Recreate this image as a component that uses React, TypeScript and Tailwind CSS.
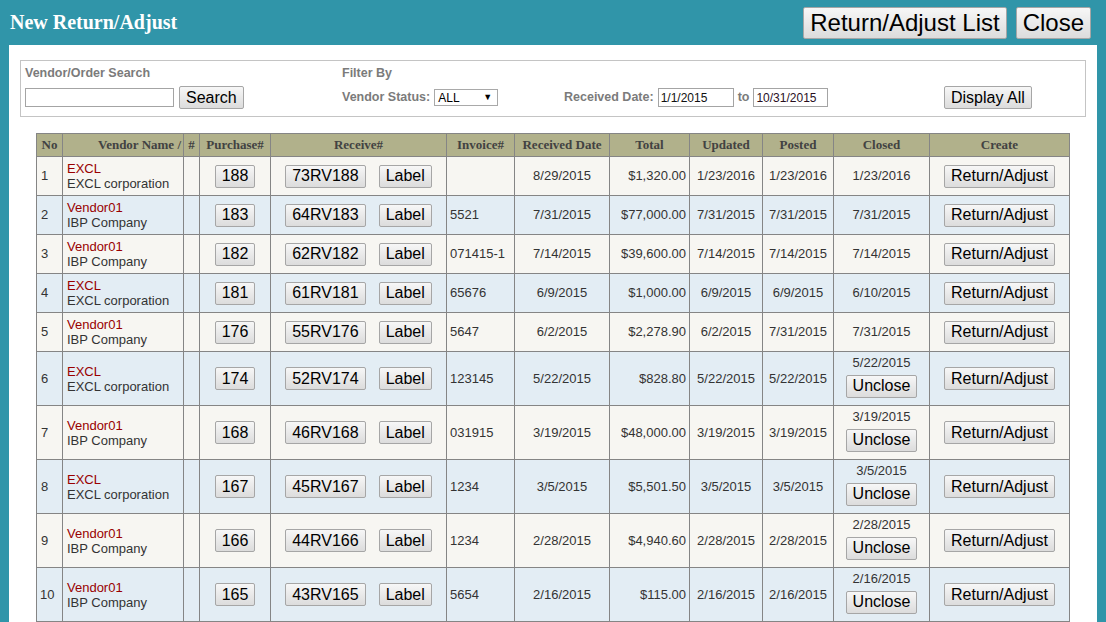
import React from "react";

const SANS = "font-['Liberation_Sans',Arial,sans-serif]";
const SERIF = "font-['Liberation_Serif','Times_New_Roman',serif]";

function Btn({ children, big = false }: { children: React.ReactNode; big?: boolean }) {
  return (
    <button
      type="button"
      className={`${SANS} font-normal inline-flex items-center justify-center whitespace-nowrap border border-[#a6a6a6] rounded-[2px] bg-linear-to-b from-[#f7f7f7] to-[#dcdcdc] text-black leading-none ${
        big ? "h-[32px] px-[6px] text-[24px]" : "h-[23px] px-[6px] text-[16px]"
      }`}
    >
      {children}
    </button>
  );
}

type Row = {
  vendor: string;
  company: string;
  po: string;
  rv: string;
  inv: string;
  rdate: string;
  total: string;
  updated: string;
  posted: string;
  closed: string;
  unclose: boolean;
};

const rows: Row[] = [
  { vendor: "EXCL", company: "EXCL corporation", po: "188", rv: "73RV188", inv: "", rdate: "8/29/2015", total: "$1,320.00", updated: "1/23/2016", posted: "1/23/2016", closed: "1/23/2016", unclose: false },
  { vendor: "Vendor01", company: "IBP Company", po: "183", rv: "64RV183", inv: "5521", rdate: "7/31/2015", total: "$77,000.00", updated: "7/31/2015", posted: "7/31/2015", closed: "7/31/2015", unclose: false },
  { vendor: "Vendor01", company: "IBP Company", po: "182", rv: "62RV182", inv: "071415-1", rdate: "7/14/2015", total: "$39,600.00", updated: "7/14/2015", posted: "7/14/2015", closed: "7/14/2015", unclose: false },
  { vendor: "EXCL", company: "EXCL corporation", po: "181", rv: "61RV181", inv: "65676", rdate: "6/9/2015", total: "$1,000.00", updated: "6/9/2015", posted: "6/9/2015", closed: "6/10/2015", unclose: false },
  { vendor: "Vendor01", company: "IBP Company", po: "176", rv: "55RV176", inv: "5647", rdate: "6/2/2015", total: "$2,278.90", updated: "6/2/2015", posted: "7/31/2015", closed: "7/31/2015", unclose: false },
  { vendor: "EXCL", company: "EXCL corporation", po: "174", rv: "52RV174", inv: "123145", rdate: "5/22/2015", total: "$828.80", updated: "5/22/2015", posted: "5/22/2015", closed: "5/22/2015", unclose: true },
  { vendor: "Vendor01", company: "IBP Company", po: "168", rv: "46RV168", inv: "031915", rdate: "3/19/2015", total: "$48,000.00", updated: "3/19/2015", posted: "3/19/2015", closed: "3/19/2015", unclose: true },
  { vendor: "EXCL", company: "EXCL corporation", po: "167", rv: "45RV167", inv: "1234", rdate: "3/5/2015", total: "$5,501.50", updated: "3/5/2015", posted: "3/5/2015", closed: "3/5/2015", unclose: true },
  { vendor: "Vendor01", company: "IBP Company", po: "166", rv: "44RV166", inv: "1234", rdate: "2/28/2015", total: "$4,940.60", updated: "2/28/2015", posted: "2/28/2015", closed: "2/28/2015", unclose: true },
  { vendor: "Vendor01", company: "IBP Company", po: "165", rv: "43RV165", inv: "5654", rdate: "2/16/2015", total: "$115.00", updated: "2/16/2015", posted: "2/16/2015", closed: "2/16/2015", unclose: true },
];

const colWidths = [26, 121, 16, 71, 176, 68, 95, 80, 73, 71, 96, 140];

const th = `${SERIF} border border-[#858585] bg-[#b1b18b] text-[#424242] text-[13px] font-bold text-center align-middle px-0 py-0 whitespace-nowrap`;
const td = "border border-[#858585] align-middle p-0";

export default function App() {
  return (
    <div className={`${SANS} min-h-screen w-full bg-[#3095a9] flex flex-col`}>
      {/* Top bar */}
      <div className="h-[45px] flex items-center justify-between pl-[10px] pr-[15px] shrink-0">
        <div className={`${SERIF} text-white font-bold text-[20px] leading-none pb-[1px]`}>New Return/Adjust</div>
        <div className="flex items-center gap-[9px] pt-[1px]">
          <Btn big>Return/Adjust List</Btn>
          <Btn big>Close</Btn>
        </div>
      </div>

      {/* Panel */}
      <div className="mx-[9px] flex-1 bg-white pt-[15px] px-[11px] pb-[20px]">
        {/* Filter box */}
        <div className="h-[57px] border border-[#c4c4c4] pl-[4px] pt-[4px] flex items-start text-[#7b7b7b] font-bold text-[12.5px]">
          <div className="w-[317px] flex flex-col">
            <div className="h-[16px] leading-[16px]">Vendor/Order Search</div>
            <div className="mt-[5px] h-[23px] flex items-center gap-[5px]">
              <div className="w-[149px] h-[19px] border border-[#a4a4a4] bg-white" />
              <Btn>Search</Btn>
            </div>
          </div>
          <div className="w-[222px] flex flex-col">
            <div className="h-[16px] leading-[16px]">Filter By</div>
            <div className="mt-[5px] h-[23px] flex items-center gap-[4px]">
              <span>Vendor Status:</span>
              <div className="w-[64px] h-[17px] border border-[#a9a9a9] bg-white flex items-center justify-between pl-[3px] pr-[5px] text-black font-normal text-[12px]">
                <span className="leading-none">ALL</span>
                <span className="text-[9px] leading-none">▼</span>
              </div>
            </div>
          </div>
          <div className="w-[380px] flex flex-col">
            <div className="h-[16px]" />
            <div className="mt-[5px] h-[23px] flex items-center">
              <span>Received Date:</span>
              <div className="ml-[4px] w-[76px] h-[19px] border border-[#a4a4a4] bg-white flex items-center pl-[2px] text-[12px] font-normal text-[#111]">
                1/1/2015
              </div>
              <span className="ml-[4px]">to</span>
              <div className="ml-[4px] w-[75px] h-[19px] border border-[#a4a4a4] bg-white flex items-center pl-[2px] text-[12px] font-normal text-[#2a0f1e]">
                10/31/2015
              </div>
            </div>
          </div>
          <div className="flex flex-col">
            <div className="h-[16px]" />
            <div className="mt-[5px] h-[23px] flex items-center">
              <Btn>Display All</Btn>
            </div>
          </div>
        </div>

        {/* Table */}
        <table className="mt-[16px] ml-[16px] border-collapse table-fixed w-[1033px] text-[13px] text-[#333]">
          <colgroup>
            {colWidths.map((w, i) => (
              <col key={i} style={{ width: w }} />
            ))}
          </colgroup>
          <thead>
            <tr className="h-[23px]">
              <th className={th}>No</th>
              <th className={`${th} !text-right pr-[2px]`}>Vendor Name /</th>
              <th className={th}>#</th>
              <th className={th}>Purchase#</th>
              <th className={th}>Receive#</th>
              <th className={th}>Invoice#</th>
              <th className={th}>Received Date</th>
              <th className={th}>Total</th>
              <th className={th}>Updated</th>
              <th className={th}>Posted</th>
              <th className={th}>Closed</th>
              <th className={th}>Create</th>
            </tr>
          </thead>
          <tbody>
            {rows.map((r, i) => (
              <tr key={i} className={`${r.unclose ? "h-[54px]" : "h-[39px]"} ${i % 2 === 0 ? "bg-[#f7f6f2]" : "bg-[#e3edf4]"}`}>
                <td className={`${td} pl-[4px] ${i === 9 ? "!pl-[3px]" : ""}`}>{i + 1}</td>
                <td className={`${td} pl-[4px] leading-[15px]`}>
                  <div className="text-[#990000]">{r.vendor}</div>
                  <div>{r.company}</div>
                </td>
                <td className={td}></td>
                <td className={`${td} text-center`}>
                  <Btn>{r.po}</Btn>
                </td>
                <td className={td}>
                  <div className="flex items-center justify-center gap-[13px]">
                    <Btn>{r.rv}</Btn>
                    <Btn>Label</Btn>
                  </div>
                </td>
                <td className={`${td} pl-[3px]`}>{r.inv}</td>
                <td className={`${td} text-center`}>{r.rdate}</td>
                <td className={`${td} text-right pr-[3px]`}>{r.total}</td>
                <td className={`${td} text-center`}>{r.updated}</td>
                <td className={`${td} text-center`}>{r.posted}</td>
                <td className={`${td} text-center`}>
                  {r.unclose ? (
                    <div className="flex flex-col items-center mb-[5px]">
                      <div className="leading-[15px]">{r.closed}</div>
                      <div className="mt-[5px]">
                        <Btn>Unclose</Btn>
                      </div>
                    </div>
                  ) : (
                    r.closed
                  )}
                </td>
                <td className={`${td} text-center`}>
                  <Btn>Return/Adjust</Btn>
                </td>
              </tr>
            ))}
          </tbody>
        </table>
      </div>
    </div>
  );
}
